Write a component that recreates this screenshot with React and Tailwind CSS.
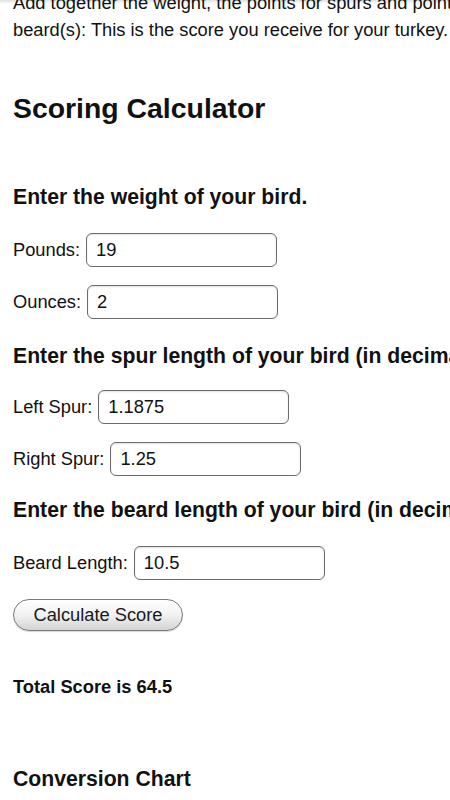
import React from "react";

function Field({ label, value, mt }) {
  return (
    <div className={`flex items-center gap-[6px] ${mt}`}>
      <span className="text-[18.3px] leading-[22px] text-[#111]">{label}</span>
      <div className="w-[191px] h-[34px] rounded-[6px] border border-[#6b6b6b] bg-white flex items-center pl-[9px] text-[18.3px] text-[#111] shadow-[inset_0_1px_2px_rgba(0,0,0,0.12)]">
        {value}
      </div>
    </div>
  );
}

export default function App() {
  return (
    <div className="relative w-[450px] h-[800px] overflow-hidden bg-white font-['Liberation_Sans',Arial,sans-serif] text-[#111]">
      <div className="absolute top-0 left-0 right-0 h-[4px] bg-gradient-to-b from-[rgba(0,0,0,0.12)] to-transparent" />
      <div className="w-[560px] pl-[13px]">
        <p className="mt-[-11px] text-[18.3px] leading-[27px] whitespace-nowrap">
          Add together the weight, the points for spurs and points for
          <br />
          beard(s): This is the score you receive for your turkey.
        </p>
        <h1 className="mt-[49px] text-[28.4px] leading-[32px] font-bold">Scoring Calculator</h1>
        <h2 className="mt-[61px] text-[21.2px] leading-[24px] font-bold">Enter the weight of your bird.</h2>
        <Field label="Pounds:" value="19" mt="mt-[24px]" />
        <Field label="Ounces:" value="2" mt="mt-[18px]" />
        <h2 className="mt-[25px] text-[21.2px] leading-[24px] font-bold whitespace-nowrap">
          Enter the spur length of your bird (in decimal inches).
        </h2>
        <Field label="Left Spur:" value="1.1875" mt="mt-[22px]" />
        <Field label="Right Spur:" value="1.25" mt="mt-[18px]" />
        <h2 className="mt-[22px] text-[21.2px] leading-[24px] font-bold whitespace-nowrap">
          Enter the beard length of your bird (in decimal inches).
        </h2>
        <Field label="Beard Length:" value="10.5" mt="mt-[24px]" />
        <button className="mt-[19px] w-[170px] h-[32px] rounded-full border border-[#7a7a7a] bg-gradient-to-b from-white via-[#f1f1f1] to-[#d4d4d4] text-[18.3px] text-[#1a1a1a] flex items-center justify-center shadow-[0_1px_1px_rgba(0,0,0,0.15)]">
          Calculate Score
        </button>
        <p className="mt-[45px] text-[18.3px] leading-[22px] font-bold">Total Score is 64.5</p>
        <h2 className="mt-[69px] text-[21.2px] leading-[24px] font-bold">Conversion Chart</h2>
      </div>
    </div>
  );
}
